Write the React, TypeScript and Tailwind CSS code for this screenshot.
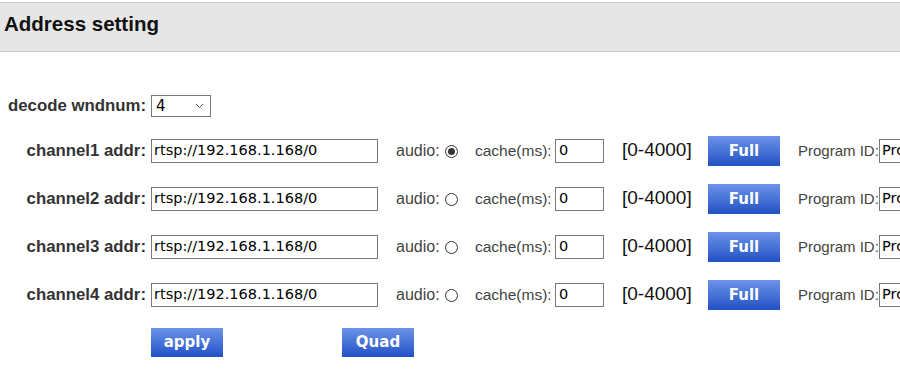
import React from "react";

const btn =
  "shrink-0 flex items-center justify-center w-[72px] text-white font-bold text-[15px] bg-gradient-to-b from-[#6d93e8] to-[#2250c6] [font-family:'DejaVu_Sans',sans-serif]";

function Radio({ checked }: { checked: boolean }) {
  return (
    <span className="shrink-0 ml-[5px] flex items-center justify-center w-[13px] h-[13px] rounded-full border border-[#333] bg-white">
      {checked && <span className="w-[7px] h-[7px] rounded-full bg-[#333]" />}
    </span>
  );
}

function Row({ n, checked }: { n: number; checked: boolean }) {
  return (
    <div className="flex items-center h-[48px] w-[1100px]">
      <div className="shrink-0 w-[146px] text-right font-bold text-[16.8px] text-[#333] leading-[20px]">
        channel{n} addr:
      </div>
      <div className="shrink-0 ml-[5px] w-[227px] h-[24px] border border-[#7a7a7a] bg-white flex items-center pl-[2px] text-[14.5px] text-black [font-family:'DejaVu_Sans',sans-serif] overflow-hidden whitespace-nowrap">
        rtsp://192.168.1.168/0
      </div>
      <div className="shrink-0 ml-[18px] w-[61px] flex items-center text-[16px] text-[#444] leading-[20px]">
        <span>audio:</span>
        <Radio checked={checked} />
      </div>
      <div className="shrink-0 ml-[18px] text-[15.5px] text-[#444] leading-[20px] w-[80px] whitespace-nowrap">cache(ms):</div>
      <div className="shrink-0 w-[49px] h-[24px] border border-[#7a7a7a] bg-white flex items-center pl-[3px] text-[14.5px] text-black [font-family:'DejaVu_Sans',sans-serif]">
        0
      </div>
      <div className="shrink-0 ml-[18px] w-[86px] text-[19px] text-[#111] leading-[22px] -mt-[3px] whitespace-nowrap">[0-4000]</div>
      <div className={btn + " h-[30px]"}>Full</div>
      <div className="shrink-0 ml-[18px] w-[81px] text-[15px] text-[#444] leading-[20px] whitespace-nowrap">Program ID:</div>
      <div className="shrink-0 w-[120px] h-[24px] border border-[#7a7a7a] bg-white flex items-center pl-[2px] text-[14.5px] text-black [font-family:'DejaVu_Sans',sans-serif]">
        Program
      </div>
    </div>
  );
}

export default function App() {
  return (
    <div className="w-[900px] h-[374px] overflow-hidden bg-white [font-family:'Liberation_Sans',Arial,sans-serif]">
      <div className="mt-[2px] h-[50px] border-t border-b border-[#c9c9c9] bg-[#e6e6e6] pl-[4px] pt-[9px]">
        <div className="text-[20.5px] leading-[24px] font-bold text-[#111]">Address setting</div>
      </div>
      <div className="mt-[43px] flex items-center h-[22px]">
        <div className="shrink-0 w-[146px] text-right font-bold text-[16.8px] text-[#333] leading-[20px]">decode wndnum:</div>
        <div className="shrink-0 ml-[5px] w-[60px] h-[22px] border border-[#7a7a7a] bg-white flex items-center justify-between pl-[4px] pr-[6px] text-[15px] text-black [font-family:'DejaVu_Sans',sans-serif]">
          <span>4</span>
          <svg width="9" height="6" viewBox="0 0 9 6" fill="none" stroke="#555" strokeWidth="1">
            <path d="M1 1l3.5 3.5L8 1" />
          </svg>
        </div>
      </div>
      <div className="mt-[10px] flex flex-col">
        <Row n={1} checked={true} />
        <Row n={2} checked={false} />
        <Row n={3} checked={false} />
        <Row n={4} checked={false} />
      </div>
      <div className="mt-[9px] flex pl-[151px] gap-[119px]">
        <div className={btn + " h-[29px]"}>apply</div>
        <div className={btn + " h-[29px]"}>Quad</div>
      </div>
    </div>
  );
}
